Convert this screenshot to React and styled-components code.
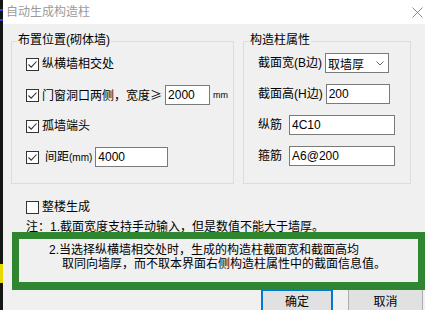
import styled, { createGlobalStyle } from "styled-components";

const GlobalStyle = createGlobalStyle`
  html, body {
    margin: 0;
    padding: 0;
    background: #f0f0f0;
  }
  body {
    font-family: "Liberation Sans", "Noto Sans CJK SC", sans-serif;
    font-size: 12px;
    color: #000;
  }
`;

const Screen = styled.div`
  display: flex;
  width: 425px;
  height: 310px;
  overflow: hidden;
`;

const Strip = styled.div`
  flex: 0 0 3px;
  background: linear-gradient(
    to bottom,
    #151515 0,
    #151515 9px,
    #2b44d6 9px,
    #2b44d6 11px,
    #151515 11px,
    #151515 19px,
    #2b44d6 19px,
    #2b44d6 21px,
    #151515 21px,
    #151515 264px,
    #e6d800 264px,
    #e6d800 283px,
    #151515 283px
  );
`;

const Window = styled.div`
  flex: 1;
  display: flex;
  flex-direction: column;
  background: #f0f0f0;
`;

const TitleBar = styled.div`
  height: 24px;
  flex: 0 0 24px;
  display: flex;
  align-items: center;
  justify-content: space-between;
  padding: 0 2px 0 3px;
  background: #fff;
`;

const Title = styled.span`
  color: #9a9a9a;
  font-size: 12px;
  line-height: 14px;
`;

const Body = styled.div`
  display: flex;
  flex-direction: column;
  padding-left: 8px;
`;

const Groups = styled.div`
  display: flex;
  gap: 9px;
  margin-top: 17px;
`;

const GroupBox = styled.div`
  position: relative;
  box-sizing: border-box;
  width: ${(p) => p.$w}px;
  height: 143px;
  border: 1px solid #dcdcdc;
  display: flex;
  flex-direction: column;
  gap: 11px;
  padding: ${(p) => p.$top}px 0 0 14px;
`;

const Legend = styled.span`
  position: absolute;
  top: -9px;
  left: 5px;
  padding: 0 1px;
  background: #f0f0f0;
  line-height: 14px;
  white-space: nowrap;
`;

const Row = styled.div`
  display: flex;
  align-items: center;
  height: 20px;
  gap: ${(p) => p.$gap || 0}px;
  white-space: nowrap;
`;

const Label = styled.span`
  line-height: 14px;
`;

const Wide = styled.span`
  font-family: "Noto Sans CJK SC", sans-serif;
`;

const Small = styled.span`
  font-size: 10px;
`;

const Box = styled.span`
  box-sizing: border-box;
  width: 13px;
  height: 13px;
  flex: 0 0 13px;
  margin-right: 3px;
  border: 1px solid #333;
  background: #fff;
  display: flex;
  align-items: center;
  justify-content: center;
`;

const Input = styled.div`
  box-sizing: border-box;
  width: ${(p) => p.$w}px;
  height: 20px;
  border: 1px solid #7a7a7a;
  background: #fff;
  padding-left: 2px;
  display: flex;
  align-items: center;
  justify-content: space-between;
  font-size: 12px;
`;

const Chevron = styled.svg`
  margin-right: 4px;
`;

const Unit = styled.span`
  font-size: 9px;
  margin-left: 3px;
`;

const Bottom = styled.div`
  display: flex;
  flex-direction: column;
  padding-left: 15px;
`;

const WholeRow = styled(Row)`
  margin-top: 13px;
`;

const Note = styled.div`
  margin-top: 4px;
  line-height: 12px;
  white-space: nowrap;
`;

const Highlight = styled.div`
  position: relative;
  z-index: 1;
  box-sizing: border-box;
  width: 413px;
  height: 58px;
  margin: -1px 0 0 1px;
  border: 7px solid #2f8530;
  border-bottom-width: 8px;
  background: #f0f0f0;
  padding: 4px 0 0 43px;
  line-height: 14px;
  white-space: nowrap;
`;

const Line = styled.div`
  text-indent: ${(p) => p.$indent || 0}px;
`;

const Buttons = styled.div`
  display: flex;
  justify-content: flex-end;
  gap: 15px;
  margin-top: -1px;
  padding-right: 2px;
`;

const Button = styled.div`
  box-sizing: border-box;
  width: ${(p) => p.$w}px;
  height: 23px;
  display: flex;
  align-items: center;
  justify-content: center;
  background: #e1e1e1;
  border: ${(p) => (p.$primary ? "2px solid #0078d7" : "1px solid #adadad")};
  font-size: 12px;
`;

const Check = ({ on }) => (
  <Box>
    {on && (
      <svg width="11" height="11" viewBox="0 0 11 11">
        <path d="M1.5 5.5 L4.2 8.2 L9.5 2.5" fill="none" stroke="#333" strokeWidth="1.1" />
      </svg>
    )}
  </Box>
);

export default function App() {
  return (
    <>
      <GlobalStyle />
      <Screen>
        <Strip />
        <Window>
          <TitleBar>
            <Title>自动生成构造柱</Title>
            <svg width="11" height="11" viewBox="0 0 11 11">
              <path d="M0.5 0.5 L10.5 10.5 M10.5 0.5 L0.5 10.5" stroke="#8a8a8a" strokeWidth="1" />
            </svg>
          </TitleBar>
          <Body>
            <Groups>
              <GroupBox $w={223} $top={12}>
                <Legend>布置位置(砌体墙)</Legend>
                <Row>
                  <Check on />
                  <Label>纵横墙相交处</Label>
                </Row>
                <Row>
                  <Check on />
                  <Label>
                    门窗洞口两侧，宽度<Wide>≥</Wide>
                  </Label>
                  <Input $w={45} style={{ marginLeft: 3 }}>2000</Input>
                  <Unit>mm</Unit>
                </Row>
                <Row>
                  <Check on />
                  <Label>孤墙端头</Label>
                </Row>
                <Row $gap={3}>
                  <Check on />
                  <Label>
                    间距<Small>(mm)</Small>
                  </Label>
                  <Input $w={73}>4000</Input>
                </Row>
              </GroupBox>
              <GroupBox $w={168} $top={11}>
                <Legend>构造柱属性</Legend>
                <Row $gap={3}>
                  <Label>截面宽(B边)</Label>
                  <Input $w={64}>
                    取墙厚
                    <Chevron width="8" height="5" viewBox="0 0 8 5">
                      <path d="M0.5 0.5 L4 4 L7.5 0.5" fill="none" stroke="#666" strokeWidth="1" />
                    </Chevron>
                  </Input>
                </Row>
                <Row $gap={3}>
                  <Label>截面高(H边)</Label>
                  <Input $w={64}>200</Input>
                </Row>
                <Row $gap={7}>
                  <Label>纵筋</Label>
                  <Input $w={106}>4C10</Input>
                </Row>
                <Row $gap={7}>
                  <Label>箍筋</Label>
                  <Input $w={106}>A6@200</Input>
                </Row>
              </GroupBox>
            </Groups>
            <Bottom>
              <WholeRow>
                <Check />
                <Label>整楼生成</Label>
              </WholeRow>
              <Note>注：1.截面宽度支持手动输入，但是数值不能大于墙厚。</Note>
            </Bottom>
            <Highlight>
              <Line $indent={-13}>2.当选择纵横墙相交处时，生成的构造柱截面宽和截面高均</Line>
              <Line>取同向墙厚，而不取本界面右侧构造柱属性中的截面信息值。</Line>
            </Highlight>
            <Buttons>
              <Button $w={72} $primary>
                确定
              </Button>
              <Button $w={75}>取消</Button>
            </Buttons>
          </Body>
        </Window>
      </Screen>
    </>
  );
}
